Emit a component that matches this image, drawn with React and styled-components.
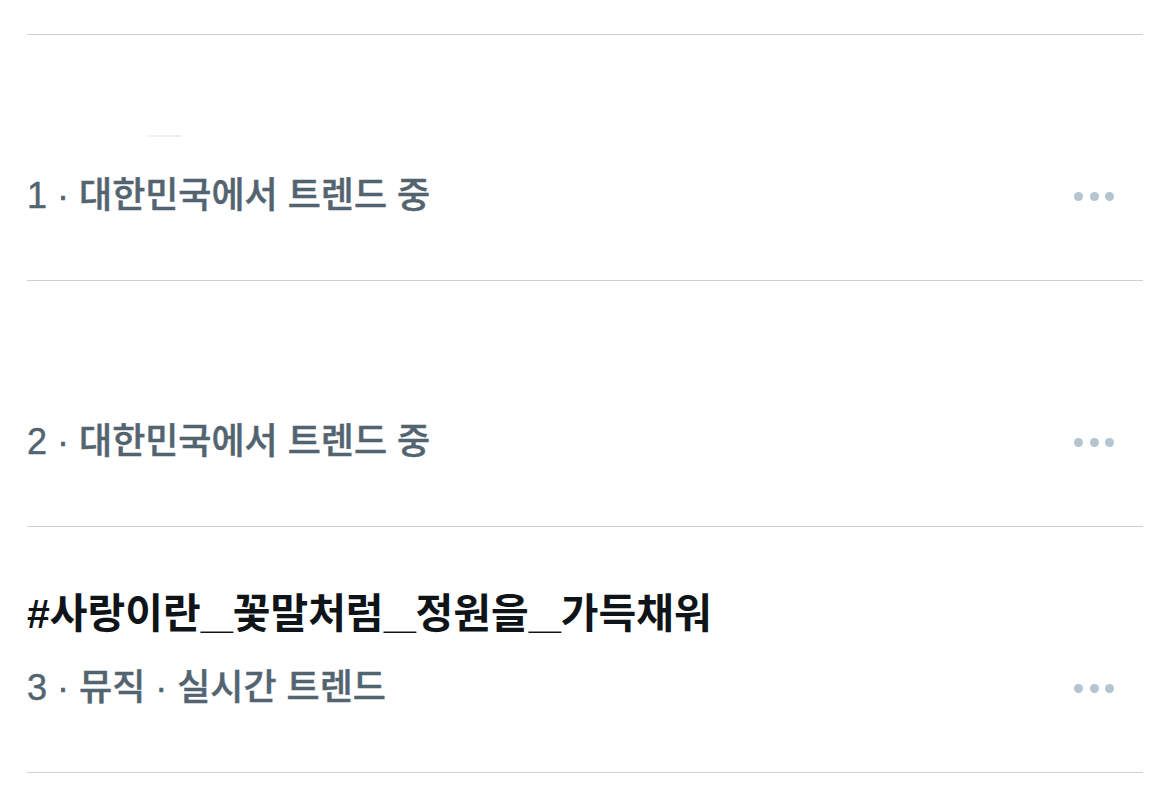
import React from 'react'
import styled, { createGlobalStyle } from 'styled-components'

const GlobalStyle = createGlobalStyle`
    body {
        margin: 0;
        background: #ffffff;
        font-family: "Liberation Sans", "Noto Sans CJK KR", sans-serif;
    }
`

const List = styled.div`
    padding: 34px 27px 0;
`

const Row = styled.div`
    height: 246px;
    box-sizing: border-box;
    border-top: 1px solid #cfcfcf;
    display: flex;
    flex-direction: column;
    padding-top: 65px;

    &:last-child {
        border-bottom: 1px solid #cfcfcf;
        height: 247px;
    }
`

const Title = styled.div`
    height: 44px;
    font-size: 41px;
    line-height: 44px;
    font-weight: 700;
    color: #0f1419;
    white-space: nowrap;
`

// the underscore is drawn wider than the latin font has it
const Under = styled.span`
    display: inline-block;
    width: 32px;
    transform: scaleX(1.4);
    transform-origin: left center;
`

const Stub = styled.span`
    display: block;
    width: 34px;
    height: 2px;
    margin-left: 120px;
    margin-top: 35px;
    background: linear-gradient(90deg, #f4f4f4, #ececec);
`

const Meta = styled.div`
    margin-top: 30px;
    height: 44px;
    display: flex;
    align-items: center;
    justify-content: space-between;
    padding-right: 29px;
`

const Sub = styled.span`
    font-size: 36px;
    line-height: 44px;
    font-weight: 500;
    color: #536471;
    -webkit-text-stroke: 0.45px #536471;
    white-space: nowrap;
`

const Dots = styled.div`
    display: flex;
    gap: 6.5px;
`

const Dot = styled.span`
    width: 9px;
    height: 9px;
    border-radius: 50%;
    background: #b4c5cf;
`

const trends = [
    { title: '', meta: '1 · 대한민국에서 트렌드 중', stub: true },
    { title: '', meta: '2 · 대한민국에서 트렌드 중' },
    { title: '#사랑이란_꽃말처럼_정원을_가득채워', meta: '3 · 뮤직 · 실시간 트렌드' },
]

function Hashtag({ text }) {
    const parts = text.split('_')
    return parts.map((p, i) => (
        <React.Fragment key={i}>
            {p}
            {i < parts.length - 1 && <Under>_</Under>}
        </React.Fragment>
    ))
}

function App() {
    return (
        <>
            <GlobalStyle />
            <List>
                {trends.map((t, i) => (
                    <Row key={i}>
                        <Title>
                            <Hashtag text={t.title} />
                            {t.stub && <Stub />}
                        </Title>
                        <Meta>
                            <Sub>{t.meta}</Sub>
                            <Dots>
                                <Dot />
                                <Dot />
                                <Dot />
                            </Dots>
                        </Meta>
                    </Row>
                ))}
            </List>
        </>
    )
}

export default App
